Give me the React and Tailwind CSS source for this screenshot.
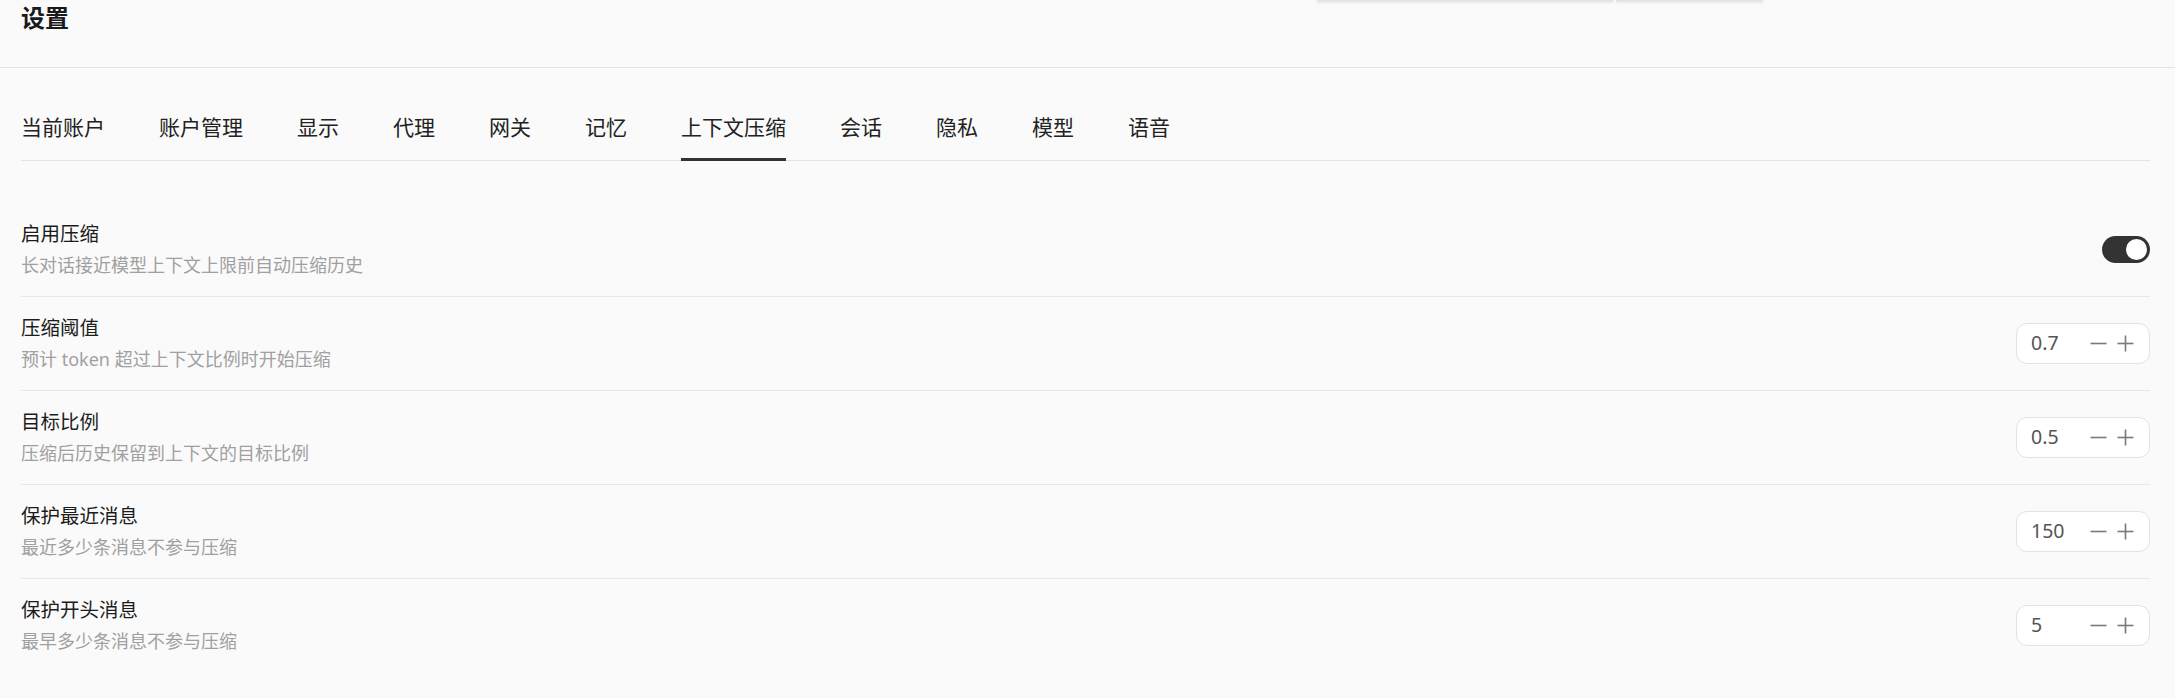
import React from "react";

const FONT = { fontFamily: '"Noto Sans", "Noto Sans CJK SC", sans-serif' };

const tabs = ["当前账户", "账户管理", "显示", "代理", "网关", "记忆", "上下文压缩", "会话", "隐私", "模型", "语音"];

const rows = [
  { title: "启用压缩", desc: "长对话接近模型上下文上限前自动压缩历史", toggle: true },
  { title: "压缩阈值", desc: "预计 token 超过上下文比例时开始压缩", value: "0.7" },
  { title: "目标比例", desc: "压缩后历史保留到上下文的目标比例", value: "0.5" },
  { title: "保护最近消息", desc: "最近多少条消息不参与压缩", value: "150" },
  { title: "保护开头消息", desc: "最早多少条消息不参与压缩", value: "5" },
];

function Toggle() {
  return (
    <div className="relative w-[48px] h-[27px] rounded-full bg-[#333333]">
      <div className="absolute right-[3px] top-[3px] w-[21px] h-[21px] rounded-full bg-white" />
    </div>
  );
}

function Stepper({ value }) {
  return (
    <div className="flex items-center w-[134px] h-[41px] rounded-[11px] border border-[#e2e2e2] bg-white pl-[14px] pr-[15px]">
      <span className="w-[59px] text-[19.5px] leading-[26px] text-[#555555]">{value}</span>
      <svg width="17" height="17" viewBox="0 0 17 17" className="shrink-0">
        <line x1="0.5" y1="8.5" x2="16.5" y2="8.5" stroke="#7a7a7a" strokeWidth="1.6" />
      </svg>
      <svg width="17" height="17" viewBox="0 0 17 17" className="shrink-0 ml-[10px]">
        <line x1="0.5" y1="8.5" x2="16.5" y2="8.5" stroke="#7a7a7a" strokeWidth="1.6" />
        <line x1="8.5" y1="0.5" x2="8.5" y2="16.5" stroke="#7a7a7a" strokeWidth="1.6" />
      </svg>
    </div>
  );
}

export default function App() {
  return (
    <div className="relative w-full h-[698px] bg-[#fafafa] overflow-hidden" style={FONT}>
      <div className="absolute top-0 left-[1317px] flex gap-[3px]">
        <div className="w-[296px] h-[2px] bg-[#e3e3e6] shadow-[0_1px_3px_rgba(0,0,0,0.08)]" />
        <div className="w-[147px] h-[2px] bg-[#e3e3e6] shadow-[0_1px_3px_rgba(0,0,0,0.08)]" />
      </div>

      <div className="h-[68px] border-b border-[#e3e3e3] pl-[21px] pt-[2px]">
        <h1 className="text-[24px] leading-[32px] font-bold text-[#1a1a1a]">设置</h1>
      </div>

      <div className="pl-[21px] pr-[25px]">
        <div className="mt-[45px] flex gap-[54px] border-b border-[#e3e3e3]">
          {tabs.map((t) => (
            <div
              key={t}
              className={
                t === "上下文压缩"
                  ? "-mb-px pb-[16px] border-b-[3px] border-[#333333] text-[21px] leading-[29px] text-[#222222]"
                  : "-mb-px pb-[16px] border-b-[3px] border-transparent text-[21px] leading-[29px] text-[#222222]"
              }
            >
              {t}
            </div>
          ))}
        </div>

        <div className="mt-[42px]">
          {rows.map((r, i) => (
            <div
              key={r.title}
              className={
                i < rows.length - 1
                  ? "flex items-center justify-between pt-[17px] pb-[18px] border-b border-[#e8e8e8]"
                  : "flex items-center justify-between pt-[17px] pb-[18px]"
              }
            >
              <div>
                <div className="text-[19.5px] leading-[28px] text-[#1c1c1c]">{r.title}</div>
                <div className="mt-[4px] text-[18px] leading-[26px] text-[#a0a0a0]">{r.desc}</div>
              </div>
              {r.toggle ? <Toggle /> : <Stepper value={r.value} />}
            </div>
          ))}
        </div>
      </div>
    </div>
  );
}
